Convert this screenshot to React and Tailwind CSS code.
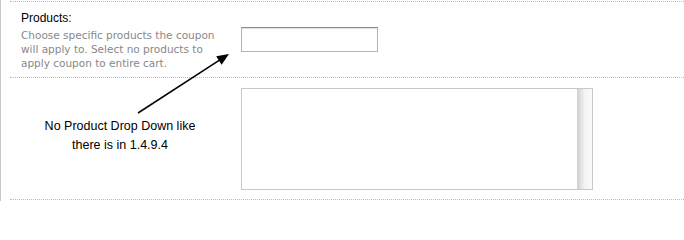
import React from "react";

// Coupon form fragment with a hand-drawn annotation on top
function App() {
  return (
    <div className="relative w-[684px] h-[201px] bg-white border-l border-[#c8c8c8] overflow-hidden">
      {/* Products row */}
      <div className="ml-[9px] mt-[1px] h-[76px] border-t border-dotted border-[#bbb] flex">
        <div className="w-[231px] pl-[11px] pt-[9px]">
          <div className="text-[12px] leading-[14px] text-black font-['Liberation_Sans',Arial,sans-serif]">
            Products:
          </div>
          <div className="mt-[3px] whitespace-nowrap text-[10.5px] leading-[14px] text-[#888] font-['DejaVu_Sans',Verdana,sans-serif]">
            Choose specific products the coupon
            <br />
            will apply to. Select no products to
            <br />
            apply coupon to entire cart.
          </div>
        </div>
        <div className="pt-[25px]">
          <div className="w-[137px] h-[25px] border border-[#b5b5b5] border-t-[#8a8a8a] shadow-[inset_0_1px_1px_#e0e0e0] bg-white"></div>
        </div>
      </div>

      {/* Product list row */}
      <div className="ml-[9px] h-[123px] border-y border-dotted border-[#bbb] flex">
        <div className="w-[231px]"></div>
        <div className="pt-[10px]">
          <div className="w-[352px] h-[102px] border border-[#c8c8c8] bg-white flex justify-end">
            <div className="w-[15px] h-full bg-gradient-to-r from-[#cfcfcf] via-[#f3f3f3] to-[#fafafa]"></div>
          </div>
        </div>
      </div>

      {/* Annotation */}
      <div className="absolute left-[19px] top-[117px] w-[200px] text-center text-[12.5px] leading-[19px] text-black font-['Liberation_Sans',Arial,sans-serif]">
        <div>No Product Drop Down like</div>
        <div>there is in 1.4.9.4</div>
      </div>
      <svg className="absolute left-0 top-0 pointer-events-none" width="684" height="201">
        <line x1="137" y1="113" x2="218.5" y2="60.2" stroke="#000" strokeWidth="1.5" />
        <polygon points="228,54 220.6,64.8 215.2,56.3" fill="#000" />
      </svg>
    </div>
  );
}

export default App;
